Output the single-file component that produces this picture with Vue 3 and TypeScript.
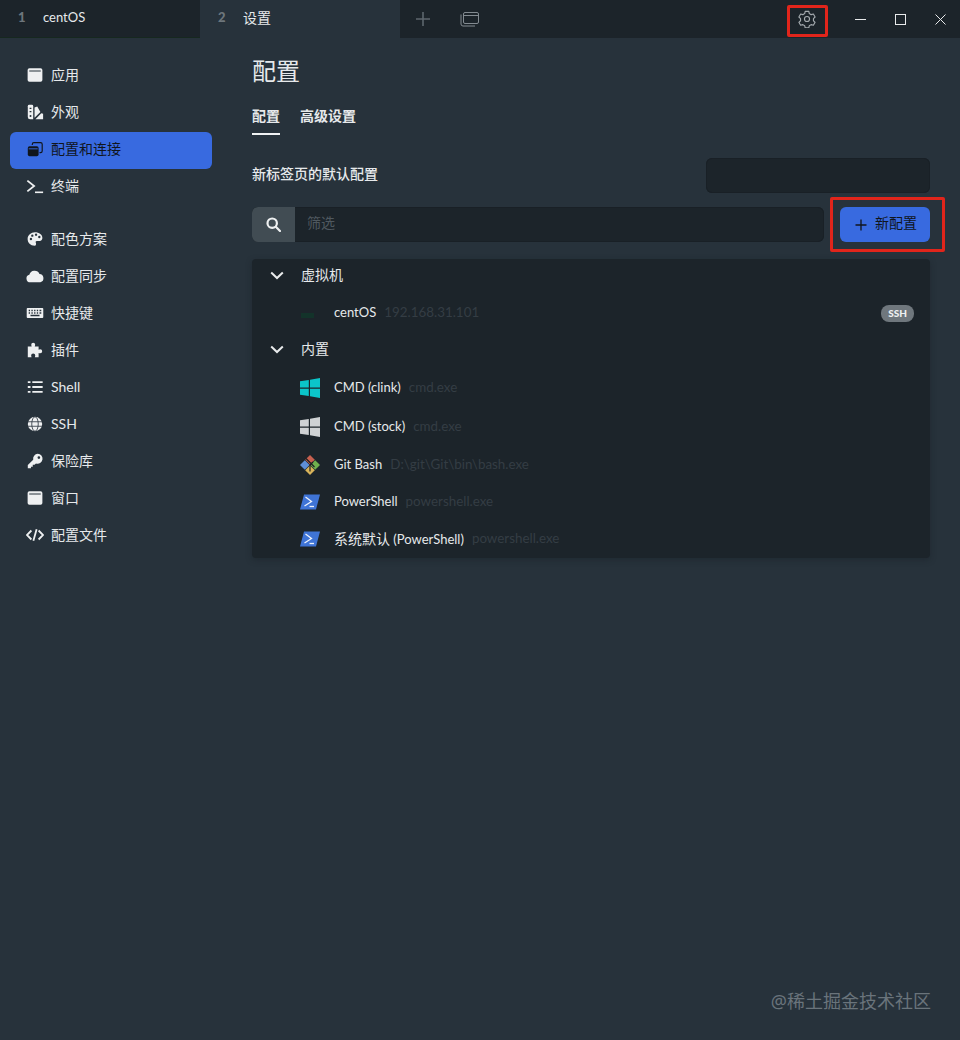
<template>
  <div class="app">
    <header class="titlebar">
      <div class="tab">
        <span class="tab-num">1</span>
        <span class="tab-name latin">centOS</span>
      </div>
      <div class="tab active">
        <span class="tab-num">2</span>
        <span class="tab-name">设置</span>
      </div>
      <button class="bar-btn plus">
        <svg width="14" height="14" viewBox="0 0 14 14"><path d="M7 0v14M0 7h14" stroke="#5d666d" stroke-width="1.6" /></svg>
      </button>
      <button class="bar-btn tabs-btn">
        <svg width="19" height="16" viewBox="0 0 19 16" fill="none" stroke="#838b91" stroke-width="1">
          <rect x="3.5" y="1.5" width="15" height="11" rx="1.5" />
          <path d="M3.5 4.5h15" />
          <path d="M1 3.5v9.5a2 2 0 0 0 2 2h12" />
        </svg>
      </button>
      <div class="spacer"></div>
      <button class="bar-btn gear">
        <svg width="18" height="18" viewBox="0 0 24 24" fill="none" stroke="#a5abaf" stroke-width="1.5" stroke-linejoin="round">
          <path d="M9.6 1.8h4.8l.7 3 2.4 1.4 3-.9 2.3 4-2.2 2.1v2.9l2.2 2.1-2.3 4-3-.9-2.4 1.4-.7 3H9.6l-.7-3-2.4-1.4-3 .9-2.3-4 2.2-2.1v-2.9L1.2 9.3l2.3-4 3 .9 2.4-1.4z" />
          <circle cx="12" cy="12" r="3.4" />
        </svg>
      </button>
      <div class="win-btns">
        <button class="win-btn">
          <svg width="11" height="11" viewBox="0 0 11 11"><path d="M0 5.5h11" stroke="#e8eaeb" stroke-width="1" /></svg>
        </button>
        <button class="win-btn">
          <svg width="11" height="11" viewBox="0 0 11 11" fill="none"><rect x=".5" y=".5" width="10" height="10" stroke="#e8eaeb" /></svg>
        </button>
        <button class="win-btn">
          <svg width="11" height="11" viewBox="0 0 11 11"><path d="M.5.5l10 10M10.5.5l-10 10" stroke="#e8eaeb" stroke-width="1" /></svg>
        </button>
      </div>
    </header>

    <div class="content">
      <nav class="sidebar">
        <div
          v-for="item in navItems"
          :key="item.label"
          class="nav-item"
          :class="{ active: item.active, gapped: item.gapped }"
        >
          <svg class="nav-icon" width="20" height="20" viewBox="0 0 20 20" v-html="item.icon"></svg>
          <span>{{ item.label }}</span>
        </div>
      </nav>

      <main class="main">
        <h1 class="title">配置</h1>
        <div class="subtabs">
          <span class="subtab current">配置</span>
          <span class="subtab">高级设置</span>
        </div>

        <div class="default-row">
          <span class="default-label">新标签页的默认配置</span>
          <div class="select"></div>
        </div>

        <div class="filter-row">
          <div class="filter">
            <div class="filter-icon">
              <svg width="15" height="15" viewBox="0 0 15 15" fill="none" stroke="#eef0f1" stroke-width="2.2">
                <circle cx="6.2" cy="6.2" r="4.7" />
                <path d="M9.8 9.8l4.2 4.2" stroke-linecap="round" />
              </svg>
            </div>
            <span class="filter-text">筛选</span>
          </div>
          <button class="new-btn">
            <svg width="12" height="12" viewBox="0 0 12 12"><path d="M6 .5v11M.5 6h11" stroke="#10151c" stroke-width="1.3" /></svg>
            <span>新配置</span>
          </button>
        </div>

        <section class="list">
          <template v-for="group in groups" :key="group.name">
            <div class="group-row">
              <svg class="chevron" width="14" height="9" viewBox="0 0 14 9" fill="none" stroke="#e9ebec" stroke-width="2">
                <path d="M1.2 1.500L7 7l5.800-5.500" />
              </svg>
              <span>{{ group.name }}</span>
            </div>
            <div
              v-for="row in group.rows"
              :key="row.name"
              class="profile-row"
              :style="{ height: row.height + 'px' }"
            >
              <svg class="profile-icon" width="20" height="20" viewBox="0 0 20 20" v-html="row.icon"></svg>
              <span class="profile-name"><span v-if="row.prefix" class="cjk">{{ row.prefix }}</span>{{ row.name }}</span>
              <span class="profile-desc">{{ row.desc }}</span>
              <span v-if="row.badge" class="badge">{{ row.badge }}</span>
            </div>
          </template>
        </section>
      </main>
    </div>

    <div class="mark mark-gear"></div>
    <div class="mark mark-new"></div>
    <div class="watermark">@稀土掘金技术社区</div>
  </div>
</template>

<script setup lang="ts">
interface NavItem {
  label: string
  icon: string
  active?: boolean
  gapped?: boolean
}

interface ProfileRow {
  name: string
  desc: string
  icon: string
  height: number
  prefix?: string
  badge?: string
}

const windowIcon =
  '<path fill-rule="evenodd" d="M3.8 2.500h12.400a2 2 0 0 1 2 2v11a2 2 0 0 1-2 2H3.800a2 2 0 0 1-2-2v-11a2 2 0 0 1 2-2zM3.600 5v1.200h12.800V5z" fill="#eef0f1"/>'

const navItems: NavItem[] = [
  { label: '应用', icon: windowIcon },
  {
    label: '外观',
    icon: '<path d="M2 3.500A1.500 1.500 0 0 1 3.500 2h3A1.500 1.500 0 0 1 8 3.500V18H4.500A2.500 2.500 0 0 1 2 15.500z" fill="#eef0f1"/><path d="M9.500 5l3-1 3.500 6-6.500 6.500zM10.500 18l6.500-6.500 2 .5v6z" fill="#eef0f1"/><circle cx="5" cy="14.500" r="1.100" fill="#27323b"/><path d="M4 6h2M4 9.500h2" stroke="#27323b" stroke-width="1.400"/>'
  },
  {
    label: '配置和连接',
    active: true,
    icon: '<path d="M7 5.500V4.800A1.800 1.800 0 0 1 8.800 3h7.400A1.800 1.800 0 0 1 18 4.800v7.400a1.800 1.800 0 0 1-1.800 1.800H15" fill="none" stroke="#10151c" stroke-width="1.300"/><rect x="2" y="7" width="12" height="11" rx="2" fill="#10151c"/><path d="M3 9.800h10" stroke="#386ae0"/>'
  },
  {
    label: '终端',
    icon: '<path d="M1.500 4l7.500 6-7.500 6" fill="none" stroke="#eef0f1" stroke-width="2"/><path d="M10 17h9" stroke="#eef0f1" stroke-width="1.800"/>'
  },
  {
    label: '配色方案',
    gapped: true,
    icon: '<path fill-rule="evenodd" d="M10 2.500c4.500 0 8.500 2.800 8.200 6.600-.2 2.300-2 3.200-4.200 3.200h-2c-1 0-1.600 1-1.100 1.900.5 1 .6 3.300-1.400 3.300C5 17.500 1.800 14.200 1.800 10S5.500 2.500 10 2.500z" fill="#eef0f1"/><circle cx="5.500" cy="10" r="1.300" fill="#27323b"/><circle cx="7" cy="6.300" r="1.300" fill="#27323b"/><circle cx="11.200" cy="5.200" r="1.300" fill="#27323b"/><circle cx="14.800" cy="7.800" r="1.300" fill="#27323b"/>'
  },
  {
    label: '配置同步',
    icon: '<path d="M5 17a4.500 4.500 0 0 1-4.500-4.300 4 4 0 0 1 3.200-4A6 6 0 0 1 15 7.800a4.700 4.700 0 0 1 1 9.200z" fill="#eef0f1"/>'
  },
  {
    label: '快捷键',
    icon: '<path fill-rule="evenodd" d="M1.800 4.500h16.400a1 1 0 0 1 1 1v9a1 1 0 0 1-1 1H1.800a1 1 0 0 1-1-1v-9a1 1 0 0 1 1-1zM3 6.500V8h1.500V6.500zM6 6.500V8h1.500V6.500zM9 6.500V8h1.500V6.500zM12 6.500V8h1.500V6.500zM15 6.500V8h2V6.500zM3 9.300v1.500h1.500V9.300zM6 9.300v1.500h1.500V9.300zM9 9.300v1.500h1.500V9.300zM12 9.300v1.500h1.500V9.300zM15 9.300v1.500h2V9.300zM5 12v1.500h10V12z" fill="#eef0f1"/>'
  },
  {
    label: '插件',
    icon: '<path d="M8 2a2.200 2.200 0 0 1 2.200 2.200c0 .8-.5 1.200-.5 1.800h4.300v3.800c.6 0 1-.5 1.800-.5a2.200 2.200 0 1 1 0 4.400c-.8 0-1.200-.5-1.800-.5V18h-4.200c0-.6.500-1.100.5-1.900a2.300 2.300 0 1 0-4.600 0c0 .8.500 1.300.5 1.900H2V6h4.300c0-.6-.5-1-.5-1.800A2.200 2.200 0 0 1 8 2z" fill="#eef0f1"/>'
  },
  {
    label: 'Shell',
    icon: '<path d="M7 4.500h11.500M7 10h11.500M7 15.500h11.500" stroke="#eef0f1" stroke-width="2"/><path d="M2 3.500h3v2H2zM2 9h3v2H2zM2 14.500h3v2H2z" fill="#eef0f1"/>'
  },
  {
    label: 'SSH',
    icon: '<circle cx="10" cy="10" r="8" fill="#eef0f1"/><path d="M2 7.500h16M2 12.500h16" stroke="#27323b" stroke-width=".9"/><ellipse cx="10" cy="10" rx="3.600" ry="8" fill="none" stroke="#27323b" stroke-width=".9"/>'
  },
  {
    label: '保险库',
    icon: '<path fill-rule="evenodd" d="M13 2a5.500 5.500 0 1 1-1.900 10.700L9.500 14.300H7.500v2H5.500V18H2v-3.500l6-6A5.500 5.500 0 0 1 13 2zm1.300 2.700a1.500 1.500 0 1 0 0 3 1.500 1.500 0 0 0 0-3z" fill="#eef0f1"/>'
  },
  { label: '窗口', icon: windowIcon },
  {
    label: '配置文件',
    icon: '<path d="M6 5l-5 5 5 5M14 5l5 5-5 5M11.800 3.500l-3.600 13" fill="none" stroke="#eef0f1" stroke-width="2"/>'
  }
]

const winIcon = (color: string) =>
  `<path d="M0 3.200L8.800 2v7.500H0zM10 1.800L20 0v9.500H10zM0 10.700h8.800V18L0 16.800zM10 10.700h10V20l-10-1.800z" fill="${color}"/>`

const psIcon =
  '<path d="M4 2.500h16l-4 15H0z" fill="#3f74d6"/><path d="M5.500 5l6 4.500-7 4.500" fill="none" stroke="#eef3fb" stroke-width="1.300"/><path d="M9.500 14.500h4.500" stroke="#eef3fb" stroke-width="1.300"/>'

const gitIcon =
  '<path d="M10 0l4.800 4.800L10 9.600 5.200 4.800z" fill="#c8604f"/><path d="M4.800 5.200L9.600 10l-4.800 4.800L0 10z" fill="#5e8ed6"/><path d="M15.200 5.200L20 10l-4.800 4.800L10.400 10z" fill="#6fb04d"/><path d="M10 10.400l4.800 4.800L10 20l-4.800-4.800z" fill="#d9b45a"/><path d="M6 3.500l8.500 8.500M10 10v6.500M10 10l3-3" stroke="#1c1f22" stroke-width="1.200"/>'

const groups: { name: string; rows: ProfileRow[] }[] = [
  {
    name: '虚拟机',
    rows: [
      {
        name: 'centOS',
        desc: '192.168.31.101',
        badge: 'SSH',
        height: 37,
        icon: '<path d="M1 10h13v5H1z" fill="#13332a"/>'
      }
    ]
  },
  {
    name: '内置',
    rows: [
      { name: 'CMD (clink)', desc: 'cmd.exe', height: 39, icon: winIcon('#0bc5c9') },
      { name: 'CMD (stock)', desc: 'cmd.exe', height: 39, icon: winIcon('#cfd2d4') },
      { name: 'Git Bash', desc: 'D:\\git\\Git\\bin\\bash.exe', height: 37, icon: gitIcon },
      { name: 'PowerShell', desc: 'powershell.exe', height: 37, icon: psIcon },
      { prefix: '系统默认', name: ' (PowerShell)', desc: 'powershell.exe', height: 37, icon: psIcon }
    ]
  }
]
</script>

<style>
body {
  background: #27323b;
}
</style>

<style scoped>
.app {
  position: relative;
  display: flex;
  flex-direction: column;
  width: 960px;
  height: 1040px;
  overflow: hidden;
  background: #27323b;
  color: #e6e9eb;
  font-family: Lato, "Noto Sans CJK SC", sans-serif;
  font-size: 14px;
}

button {
  padding: 0;
  border: 0;
  background: none;
  font: inherit;
}

.titlebar {
  display: flex;
  flex: none;
  align-items: stretch;
  height: 38px;
  background: #1c242a;
}

.tab {
  display: flex;
  align-items: center;
  width: 200px;
  padding-left: 18px;
  padding-bottom: 4px;
  box-sizing: border-box;
  border-bottom: 1px solid #16281f;
}

.tab.active {
  background: #27323b;
  border-bottom: 0;
  padding-bottom: 5px;
}

.tab-num {
  width: 25px;
  color: #6d767c;
  font-weight: 900;
  font-size: 13px;
}

.tab-name {
  color: #e6e9eb;
}

.tab-name.latin {
  font-size: 13px;
}

.bar-btn {
  display: flex;
  align-items: center;
  justify-content: center;
}

.plus {
  width: 46px;
}

.tabs-btn {
  width: 46px;
}

.spacer {
  flex: 1;
}

.gear {
  width: 40px;
  margin-right: 13px;
}

.win-btns {
  display: flex;
}

.win-btn {
  display: flex;
  align-items: center;
  justify-content: center;
  width: 40px;
}

.content {
  display: flex;
  flex: 1;
}

.sidebar {
  flex: none;
  width: 202px;
  margin-left: 10px;
  padding-top: 20px;
}

.nav-item {
  display: flex;
  align-items: center;
  gap: 10px;
  height: 37px;
  padding-left: 15px;
  padding-bottom: 5px;
  border-radius: 6px;
  box-sizing: border-box;
  color: #e6e9eb;
}

.nav-item.gapped {
  margin-top: 16px;
}

.nav-item.active {
  background: #386ae0;
  color: #10151c;
}

.nav-icon {
  flex: none;
  width: 20px;
  height: 20px;
  margin-right: -4px;
  transform: translateY(1px) scale(0.9);
}

.main {
  flex: 1;
  padding: 14px 30px 0 40px;
  min-width: 0;
}

.title {
  margin: 0;
  font-size: 24px;
  font-weight: 400;
  line-height: 38px;
  color: #e6e9eb;
}

.subtabs {
  display: flex;
  gap: 20px;
  margin-top: 11px;
}

.subtab {
  padding: 5px 0 7px;
  font-weight: 700;
  line-height: 20px;
  border-bottom: 2px solid transparent;
}

.subtab.current {
  border-bottom-color: #f0f2f3;
}

.default-row {
  display: flex;
  align-items: center;
  justify-content: space-between;
  margin-top: 23px;
}

.default-label {
  font-weight: 500;
  padding-bottom: 5px;
}

.select {
  width: 224px;
  height: 35px;
  border-radius: 6px;
  background: #1c242a;
  box-shadow: inset 0 0 0 1px #192026;
}

.filter-row {
  display: flex;
  gap: 16px;
  margin-top: 14px;
}

.filter {
  display: flex;
  flex: 1;
  align-items: center;
  height: 35px;
  overflow: hidden;
  border-radius: 6px;
  background: #1c242a;
  box-shadow: inset 0 0 0 1px #192026;
}

.filter-icon {
  display: flex;
  flex: none;
  align-items: center;
  justify-content: center;
  width: 43px;
  height: 100%;
  background: #414c53;
}

.filter-text {
  margin-left: 12px;
  padding-bottom: 5px;
  color: #4f585f;
}

.new-btn {
  display: flex;
  flex: none;
  align-items: center;
  justify-content: center;
  gap: 8px;
  width: 90px;
  height: 35px;
  padding-bottom: 5px;
  padding-left: 2px;
  border-radius: 6px;
  background: #386ae0;
  color: #10151c;
}

.new-btn svg {
  margin-top: 5px;
}

.list {
  margin-top: 17px;
  padding-bottom: 1px;
  border-radius: 4px;
  background: #1c242a;
  box-shadow: 0 2px 6px rgba(20, 26, 32, 0.35);
}

.group-row {
  display: flex;
  align-items: center;
  gap: 17px;
  height: 33px;
  padding-left: 18px;
  padding-bottom: 4px;
  box-sizing: border-box;
}

.profile-row + .group-row {
  margin-top: 2px;
}

.group-row + .profile-row {
  margin-top: 2px;
}

.chevron {
  margin-top: 4px;
}

.profile-row {
  display: flex;
  align-items: center;
  padding-left: 48px;
  padding-right: 16px;
  box-sizing: border-box;
}

.profile-icon {
  flex: none;
  margin-right: 14px;
}

.profile-name {
  position: relative;
  top: -1px;
  font-size: 13px;
  white-space: pre;
}

.cjk {
  font-size: 14px;
}

.profile-desc {
  position: relative;
  top: -1px;
  margin-left: 8px;
  color: #343d44;
  font-size: 13.4px;
}

.badge {
  margin-left: auto;
  margin-top: 2px;
  padding: 0 7px;
  height: 17px;
  border-radius: 8px;
  background: #6f777d;
  color: #eef0f1;
  font-size: 10px;
  font-weight: 900;
  line-height: 17px;
}

.mark {
  position: absolute;
  border: 3px solid #e1251b;
  border-radius: 2px;
  box-sizing: border-box;
}

.mark-gear {
  left: 787px;
  top: 5px;
  width: 41px;
  height: 32px;
}

.mark-new {
  left: 830px;
  top: 197px;
  width: 115px;
  height: 55px;
}

.watermark {
  position: absolute;
  right: 29px;
  top: 988px;
  color: #6a747b;
  font-family: "Noto Sans", "Noto Sans CJK SC", sans-serif;
  font-size: 18px;
  line-height: 26px;
}
</style>
